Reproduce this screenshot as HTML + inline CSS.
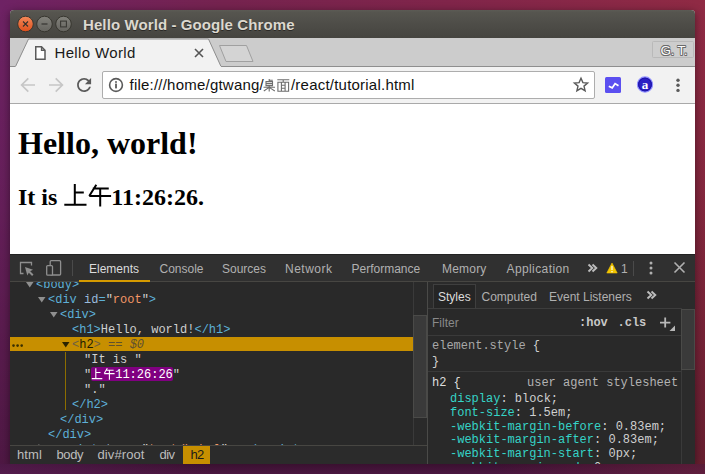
<!DOCTYPE html>
<html><head><meta charset="utf-8">
<style>
*{box-sizing:border-box;margin:0;padding:0}
html,body{width:705px;height:474px;overflow:hidden}
body{position:relative;font-family:"Liberation Sans",sans-serif;
background:linear-gradient(rgba(0,0,0,0) 0%,rgba(0,0,0,0.08) 40%,rgba(0,0,0,0.3) 100%),linear-gradient(95deg,#6e2264 0%,#75234f 30%,#80254a 60%,#922b43 100%);}
.a{position:absolute;white-space:nowrap}
svg{position:absolute;overflow:visible}
.mono{font-family:"Liberation Mono",monospace;font-size:12px;line-height:15px;white-space:pre}
.ui{font-size:12px;line-height:14px}
.tab{color:#b0b0b0}
.tg{color:#5db0d7}
.an{color:#9bbbdc}
.av{color:#f29766}
.tx{color:#cfd0d0}
.sp{color:#35d4c7}
.sv{color:#cfd0d0}
.serif{font-family:"Liberation Serif",serif;font-weight:bold;color:#000}
</style></head><body>
<!-- window frame -->
<div class="a" style="left:10px;top:10px;width:685px;height:454px;border-radius:4px 4px 0 0;overflow:hidden;background:#f2f2f2;box-shadow:0 2px 8px rgba(0,0,0,0.45)">
  <div class="a" style="left:0;top:0;width:685px;height:28px;background:linear-gradient(#5c5b55,#56554f 8%,#4e4d48 50%,#45443f)"></div>
</div>
<!-- title bar buttons -->
<svg width="80" height="30" style="left:10px;top:10px">
  <defs>
    <linearGradient id="gc" x1="0" y1="0" x2="0" y2="1"><stop offset="0" stop-color="#f4895a"/><stop offset="1" stop-color="#de4f1b"/></linearGradient>
    <linearGradient id="gg" x1="0" y1="0" x2="0" y2="1"><stop offset="0" stop-color="#83827c"/><stop offset="1" stop-color="#64635e"/></linearGradient>
  </defs>
  <circle cx="15.5" cy="14" r="7.8" fill="url(#gc)" stroke="#37362f" stroke-width="1"/>
  <path d="M13 11.5 L18 16.5 M18 11.5 L13 16.5" stroke="#35312c" stroke-width="1.1"/>
  <circle cx="34.5" cy="14" r="7.8" fill="url(#gg)" stroke="#37362f" stroke-width="1"/>
  <path d="M31.5 14 H37.5" stroke="#3a3935" stroke-width="1.3"/>
  <circle cx="53.5" cy="14" r="7.8" fill="url(#gg)" stroke="#37362f" stroke-width="1"/>
  <rect x="50.6" y="11.1" width="5.8" height="5.8" fill="none" stroke="#3a3935" stroke-width="1.1"/>
</svg>
<div id="ttxt" class="a" style="left:83px;top:15.5px;font-size:15px;line-height:17px;font-weight:bold;color:#dcd8cf;letter-spacing:0.1px;text-shadow:0 1px 0 #2a2926">Hello World - Google Chrome</div>

<!-- tab strip -->
<svg width="685" height="30" style="left:10px;top:38px">
  <rect x="0" y="0" width="685" height="29" fill="#cccccc"/>
  <path d="M5.5 29 L18.5 1 H198.5 L211 29 Z" fill="#f2f2f2"/><path d="M0 28.5 H5.5 L18.5 1 H198.5 L211 28.5 H685" fill="none" stroke="#8e8e8e" stroke-width="1"/><path d="M5.8 28.5 H210.7" stroke="#f2f2f2" stroke-width="1"/>
  <rect x="0" y="29" width="685" height="1" fill="#f2f2f2"/>
  <path d="M209.5 7.5 H236.5 L243 23.5 H216 Z" fill="#d4d4d4" stroke="#a0a0a0" stroke-width="1" stroke-linejoin="round"/>
  <rect x="642.5" y="3.5" width="41" height="16" rx="1" fill="#cdcdcd" stroke="#b9b9b9" stroke-width="1"/>
</svg>
<svg width="14" height="16" style="left:34px;top:46px">
  <path d="M1.75 0.75 H7.5 L11 4.25 V13.25 H1.75 Z" fill="#fff" stroke="#5a5a5a" stroke-width="1.5" stroke-linejoin="miter"/>
  <path d="M7.5 0.75 V4.25 H11" fill="none" stroke="#5a5a5a" stroke-width="1.3"/>
</svg>
<div id="tabt" class="a" style="left:54.5px;top:44px;font-size:15px;line-height:17px;color:#1a1a1a;letter-spacing:0.35px">Hello World</div>
<svg width="12" height="12" style="left:193px;top:47px">
  <path d="M2 2 L10 10 M10 2 L2 10" stroke="#555" stroke-width="1.6"/>
</svg>
<div id="gt" class="a" style="left:660.5px;top:42.5px;font-size:13.5px;line-height:16px;color:#fbfbfb;letter-spacing:-0.3px;text-shadow:0.8px 0 0 #6a6a6a,-0.8px 0 0 #6a6a6a,0 0.8px 0 #6a6a6a,0 -0.8px 0 #6a6a6a,0.6px 0.6px 0 #6a6a6a,-0.6px -0.6px 0 #6a6a6a,0.6px -0.6px 0 #6a6a6a,-0.6px 0.6px 0 #6a6a6a">G. T.</div>

<!-- toolbar -->
<div class="a" style="left:10px;top:103px;width:685px;height:1px;background:#a9a9a9"></div>
<svg width="100" height="37" style="left:10px;top:67px">
  <path d="M11.6 18 H25 M18.3 11.3 L11.6 18 L18.3 24.7" stroke="#c6c6c6" stroke-width="1.7" fill="none"/>
  <path d="M52.4 18 H39 M45.7 11.3 L52.4 18 L45.7 24.7" stroke="#c6c6c6" stroke-width="1.7" fill="none"/>
  <g transform="translate(63.6,7.5) scale(0.875)"><path d="M17.65 6.35C16.2 4.9 14.21 4 12 4c-4.42 0-7.99 3.58-7.99 8s3.57 8 7.99 8c3.73 0 6.840-2.55 7.73-6h-2.08c-.82 2.33-3.04 4-5.65 4-3.31 0-6-2.69-6-6s2.69-6 6-6c1.66 0 3.14.69 4.22 1.78L13 11h7V4l-2.35 2.35z" fill="#5a5a5a"/></g>
</svg>
<div class="a" style="left:102px;top:71px;width:493px;height:28px;background:#fff;border:1px solid #adadad;border-radius:2px"></div>
<svg width="20" height="20" style="left:106px;top:75px">
  <circle cx="10" cy="10" r="6.4" fill="none" stroke="#5a5a5a" stroke-width="1.6"/>
  <rect x="9.1" y="8.6" width="1.8" height="4.8" fill="#5a5a5a"/>
  <rect x="9.1" y="6.2" width="1.8" height="1.6" fill="#5a5a5a"/>
</svg>
<div id="url" class="a" style="left:129.5px;top:76px;font-size:15px;line-height:17px;color:#111;letter-spacing:0.22px">file:///home/gtwang/<span style="display:inline-block;width:27px"></span>/react/tutorial.html</div>
<svg width="13" height="13" style="left:262.5px;top:78.5px" fill="none" stroke="#6e6e6e" stroke-width="1.1">
  <path d="M6.2 0 V2.6 M6.2 1.3 H9.8 M3 2.6 H9.5 V6.6 H3 Z M3 4.6 H9.5 M0.5 8.2 H12 M6.2 6.6 V12.5 M5.8 8.6 L0.8 12 M6.6 8.6 L11.8 12"/>
</svg>
<svg width="13" height="13" style="left:276.5px;top:78.5px" fill="none" stroke="#6e6e6e" stroke-width="1.1">
  <path d="M0.3 0.8 H12.3 M6.2 0.8 V3.2 M0.9 12.3 V3.2 H11.6 V12.3 Z M4.4 3.2 V12.3 M8.1 3.2 V12.3 M4.4 6.2 H8.1 M4.4 9.2 H8.1"/>
</svg>
<svg width="18" height="18" style="left:572px;top:76px">
  <path d="M9 2.2 L10.9 6.6 L15.6 7 L12 10.1 L13.1 14.7 L9 12.3 L4.9 14.7 L6 10.1 L2.4 7 L7.1 6.6 Z" fill="none" stroke="#5a5a5a" stroke-width="1.4" stroke-linejoin="miter"/>
</svg>
<div class="a" style="left:605px;top:77px;width:16px;height:16px;background:#5b4ff0;border-radius:1.5px"></div>
<svg width="16" height="16" style="left:605px;top:77px">
  <path d="M3.8 9.2 L7.2 10.9 L10.1 6.6 L13.5 8.7" stroke="#fff" stroke-width="1.8" fill="none"/>
</svg>
<svg width="18" height="18" style="left:636px;top:76px">
  <circle cx="9" cy="8.5" r="7.6" fill="#2a20c4" stroke="#9090ff" stroke-width="1.1"/>
  <circle cx="9" cy="8.5" r="6.4" fill="none" stroke="#1a10a0" stroke-width="0.8"/>
  <text x="9.1" y="12.6" text-anchor="middle" font-family="Liberation Serif" font-weight="bold" font-size="13" fill="#fff">a</text>
</svg>
<svg width="6" height="16" style="left:674.5px;top:77px">
  <circle cx="3" cy="3.2" r="1.7" fill="#5a5a5a"/><circle cx="3" cy="8.2" r="1.7" fill="#5a5a5a"/><circle cx="3" cy="13.4" r="1.7" fill="#5a5a5a"/>
</svg>

<!-- page -->
<div class="a" style="left:10px;top:104px;width:685px;height:150px;background:#fff"></div>
<div class="a serif" style="left:18px;top:125px;font-size:32px;line-height:37px">Hello, world!</div>
<div class="a serif" style="left:18px;top:183px;font-size:24px;line-height:28px">It is <span style="display:inline-block;width:48px"></span>11:26:26.</div>
<svg width="56" height="30" style="left:60px;top:180px" fill="none" stroke="#000" stroke-width="2">
  <path d="M14.8 3.9 V24.8 M14.8 12.5 H23.8 M4.3 24.8 H26.5"/>
  <path d="M36.3 4.7 L29.25 16 M32.8 8.4 H48.75 M29.25 16 H51.1 M40.2 8.4 V26.5"/>
</svg>

<!-- devtools -->
<div class="a" style="left:10px;top:254px;width:685px;height:210px;background:#292929"></div>
<div class="a" style="left:10px;top:254px;width:685px;height:28px;background:#303030;border-top:1px solid #222;border-bottom:1px solid #474642"></div>
<svg width="70" height="28" style="left:10px;top:254px">
  <path d="M13.5 19.5 H10.5 V8.5 H21.5 V11.5" fill="none" stroke="#8f8f8f" stroke-width="1.3"/>
  <path d="M15 13 L23 15.8 L20.2 17.3 L23.5 20.6 L22.1 22 L18.8 18.7 L17.3 21.5 Z" fill="#8f8f8f"/>
  <rect x="40.2" y="6.7" width="10.4" height="14.3" rx="1" fill="none" stroke="#8f8f8f" stroke-width="1.3"/>
  <rect x="36.7" y="11.6" width="5.8" height="9.6" rx="1" fill="#303030" stroke="#8f8f8f" stroke-width="1.3"/>
  <rect x="62" y="6" width="1" height="16" fill="#4a4a4a"/>
</svg>
<div class="a ui tab" style="left:89px;top:262px;color:#dcdcdc">Elements</div>
<div class="a ui tab" style="left:159.5px;top:262px">Console</div>
<div class="a ui tab" style="left:222px;top:262px">Sources</div>
<div class="a ui tab" style="left:285px;top:262px;letter-spacing:0.5px">Network</div>
<div class="a ui tab" style="left:351.5px;top:262px">Performance</div>
<div class="a ui tab" style="left:442px;top:262px;letter-spacing:0.2px">Memory</div>
<div class="a ui tab" style="left:506.5px;top:262px;letter-spacing:0.4px">Application</div>
<svg width="12" height="10" style="left:587px;top:263px"><path d="M1.5 1.5 L5.3 5 L1.5 8.5 M5.5 1.5 L9.3 5 L5.5 8.5" fill="none" stroke="#bdbdbd" stroke-width="1.9"/></svg>
<svg width="14" height="14" style="left:606px;top:262px"><path d="M6 1 L11.2 11 H0.8 Z" fill="#f2c500" stroke="#f2c500" stroke-width="0.6" stroke-linejoin="round"/><rect x="5.3" y="4" width="1.4" height="4" fill="#fff8d0"/><rect x="5.3" y="9" width="1.4" height="1.3" fill="#fff8d0"/></svg>
<div class="a ui tab" style="left:621px;top:262px">1</div>
<div class="a" style="left:633px;top:261px;width:1px;height:15px;background:#4a4a4a"></div>
<svg width="6" height="16" style="left:648px;top:260px">
  <circle cx="3" cy="3" r="1.5" fill="#b0b0b0"/><circle cx="3" cy="8" r="1.5" fill="#b0b0b0"/><circle cx="3" cy="13" r="1.5" fill="#b0b0b0"/>
</svg>
<svg width="14" height="14" style="left:673px;top:261px">
  <path d="M1.5 1.5 L11.5 11.5 M11.5 1.5 L1.5 11.5" stroke="#b0b0b0" stroke-width="1.6"/>
</svg>
<div class="a" style="left:79px;top:280px;width:71px;height:2px;background:#d49a00"></div>

<!-- tree -->
<div class="a" style="left:10px;top:282px;width:403px;height:163px;overflow:hidden">
  <div class="a mono" style="left:0;top:-4px"><svg width="8" height="6" style="left:16px;top:4px"><path d="M0 0 H7.5 L3.75 5.5 Z" fill="#8f8f8f"/></svg><span class="a tg" style="left:26px">&lt;body&gt;</span></div>
  <div class="a mono" style="left:0;top:11px"><svg width="8" height="6" style="left:27.5px;top:4px"><path d="M0 0 H7.5 L3.75 5.5 Z" fill="#8f8f8f"/></svg><span class="a" style="left:38px"><span class="tg">&lt;div </span><span class="an">id</span><span class="tg">=</span><span class="tx">"</span><span class="av">root</span><span class="tx">"</span><span class="tg">&gt;</span></span></div>
  <div class="a mono" style="left:0;top:26px"><svg width="8" height="6" style="left:39.5px;top:4px"><path d="M0 0 H7.5 L3.75 5.5 Z" fill="#8f8f8f"/></svg><span class="a tg" style="left:50px">&lt;div&gt;</span></div>
  <div class="a mono" style="left:0;top:41px"><span class="a" style="left:62px"><span class="tg">&lt;h1&gt;</span><span class="tx">Hello, world!</span><span class="tg">&lt;/h1&gt;</span></span></div>
  <div class="a" style="left:0;top:55px;width:403px;height:14px;background:#c78f00"></div>
  <div class="a mono" style="left:0;top:56px"><svg width="14" height="6" style="left:0.9px;top:6.2px"><circle cx="2.5" cy="1.6" r="1.3" fill="#3a3000"/><circle cx="6.6" cy="1.6" r="1.3" fill="#3a3000"/><circle cx="10.7" cy="1.6" r="1.3" fill="#3a3000"/></svg><svg width="8" height="6" style="left:51.5px;top:3.5px"><path d="M0 0 H7.5 L3.75 5.5 Z" fill="#2a2300"/></svg><span class="a" style="left:62px"><span style="color:#6e6040">&lt;</span><span style="color:#221c00">h2</span><span style="color:#6e6040">&gt;</span><span style="color:#5e5030"> == </span><span style="color:#5e5030;font-style:italic">$0</span></span></div>
  <div class="a" style="left:55px;top:70px;width:1px;height:58px;background:#8c6d00"></div>
  <div class="a mono" style="left:0;top:71px"><span class="a tx" style="left:74px">"It is "</span></div>
  <div class="a" style="left:81.2px;top:85px;width:81.6px;height:14px;background:#800080;border-radius:2px"></div>
  <div class="a mono" style="left:0;top:86px"><span class="a tx" style="left:74px">"<span style="display:inline-block;width:24px"></span><span style="color:#fff">11:26:26</span>"</span></div>
  <svg width="26" height="14" style="left:81px;top:85px" fill="none" stroke="#fff" stroke-width="1.1">
    <path d="M4.8 1.2 V11.6 M4.8 5.5 H9.5 M0.8 11.6 H11.3"/>
    <path d="M16.3 1.2 L13.2 6.6 M14.9 3.2 H22.6 M13.2 6.6 H23.6 M18.4 3.2 V12.8"/>
  </svg>
  <div class="a mono" style="left:0;top:101px"><span class="a tx" style="left:74px">"."</span></div>
  <div class="a mono" style="left:0;top:116px"><span class="a tg" style="left:62px">&lt;/h2&gt;</span></div>
  <div class="a mono" style="left:0;top:131px"><span class="a tg" style="left:50px">&lt;/div&gt;</span></div>
  <div class="a mono" style="left:0;top:146px"><span class="a tg" style="left:38px">&lt;/div&gt;</span></div>
  <div class="a mono" style="left:0;top:161px"><svg width="8" height="10" style="left:28px;top:1px"><path d="M0.5 0 L6 4.5 L0.5 9 Z" fill="#8f8f8f"/></svg><span class="a" style="left:38px"><span class="tg">&lt;script </span><span class="an">type</span><span class="tg">=</span><span class="tx">"</span><span class="av">text/babel</span><span class="tx">"</span><span class="tg">&gt;</span><span class="tx">.</span><span class="tg">&lt;/script&gt;</span></span></div>
</div>
<!-- left scrollbar -->
<div class="a" style="left:413px;top:282px;width:14px;height:163px;background:#2a2a2a;border-left:1px solid #3a3a3a"></div>
<div class="a" style="left:413px;top:315px;width:14px;height:103px;background:#3a3a3a;border:1px solid #4a4a48"></div>
<div class="a" style="left:427px;top:282px;width:1px;height:182px;background:#4a4a48"></div>
<!-- breadcrumbs -->
<div class="a" style="left:10px;top:445px;width:417px;height:19px;background:#2b2b2b;border-top:1px solid #474642"></div>
<div class="a ui" style="left:17px;top:447px;font-size:13px;line-height:15px;letter-spacing:0.1px;color:#bdbdbd">html</div>
<div class="a ui" style="left:56.5px;top:447px;font-size:13px;line-height:15px;letter-spacing:-0.4px;color:#bdbdbd">body</div>
<div class="a ui" style="left:97.5px;top:447px;font-size:13px;line-height:15px;letter-spacing:0.1px;color:#bdbdbd">div#root</div>
<div class="a ui" style="left:159.5px;top:447px;font-size:13px;line-height:15px;letter-spacing:-0.5px;color:#bdbdbd">div</div>
<div class="a" style="left:182.5px;top:446px;width:27px;height:18px;background:#c78f00"></div>
<div class="a ui" style="left:190.5px;top:447px;font-size:13px;line-height:15px;letter-spacing:-0.8px;color:#1a1a1a">h2</div>

<!-- sidebar -->
<div class="a" style="left:428px;top:282px;width:267px;height:27px;background:#2b2b2b;border-bottom:1px solid #3d3d3d"></div>
<div class="a" style="left:433px;top:284px;width:43px;height:24px;border:1px solid #3f3f3f;border-bottom:none;background:#252525"></div>
<div class="a ui tab" style="left:438px;top:290px;color:#dcdcdc">Styles</div>
<div class="a ui tab" style="left:481.5px;top:290px">Computed</div>
<div class="a ui tab" style="left:549px;top:290px">Event Listeners</div>
<svg width="12" height="10" style="left:645.5px;top:290px"><path d="M1.5 1.5 L5.3 5 L1.5 8.5 M5.5 1.5 L9.3 5 L5.5 8.5" fill="none" stroke="#bdbdbd" stroke-width="1.9"/></svg>
<div class="a" style="left:428px;top:335px;width:253px;height:1px;background:#3a3a3a"></div>
<div class="a ui" style="left:432px;top:316px;color:#8a8a8a">Filter</div>
<div class="a mono" style="left:579px;top:316px;color:#c8c8c8;font-weight:bold">:hov</div><div class="a mono" style="left:617.5px;top:316px;color:#c8c8c8;font-weight:bold">.cls</div>
<svg width="18" height="16" style="left:659px;top:317px"><path d="M1 5.6 H11.4 M6.2 0.6 V10.6" stroke="#b8b8b8" stroke-width="1.8"/><path d="M16 8.5 V14 H10.5 Z" fill="#b8b8b8"/></svg>
<div class="a mono" style="left:432px;top:339px;color:#a8a8a8">element.style <span class="sv">{</span></div>
<div class="a mono sv" style="left:432px;top:355px">}</div>
<div class="a" style="left:428px;top:371px;width:253px;height:1px;background:#3a3a3a"></div>
<div class="a mono" style="left:432px;top:376px;color:#dedede">h2 {</div>
<div class="a mono" style="left:527px;top:376px;color:#b3b3b3">user agent stylesheet</div>
<div class="a mono" style="left:450px;top:391.7px"><span class="sp">display</span><span class="sv">: block;</span></div>
<div class="a mono" style="left:450px;top:405.6px"><span class="sp">font-size</span><span class="sv">: 1.5em;</span></div>
<div class="a mono" style="left:450px;top:419.5px"><span class="sp">-webkit-margin-before</span><span class="sv">: 0.83em;</span></div>
<div class="a mono" style="left:450px;top:433.4px"><span class="sp">-webkit-margin-after</span><span class="sv">: 0.83em;</span></div>
<div class="a mono" style="left:450px;top:447.3px"><span class="sp">-webkit-margin-start</span><span class="sv">: 0px;</span></div>
<div class="a mono" style="left:450px;top:461.2px"><span class="sp">-webkit-margin-end</span><span class="sv">: 0px;</span></div>
<div class="a" style="left:681px;top:308px;width:14px;height:156px;background:#2b2b2b;border-left:1px solid #3a3a3a"></div>
<div class="a" style="left:681px;top:309px;width:14px;height:61px;background:#3a3a3a;border:1px solid #4a4a48"></div>

<!-- desktop below window -->
<div class="a" style="left:0;top:464px;width:705px;height:10px;background:linear-gradient(#3a1030,#4a1640);opacity:1"></div><div class="a" style="left:0;top:464px;width:705px;height:10px;background:linear-gradient(90deg,rgba(90,30,85,0.6),rgba(0,0,0,0) 30%,rgba(0,0,0,0) 70%,rgba(110,35,60,0.6))"></div>
</body></html>
